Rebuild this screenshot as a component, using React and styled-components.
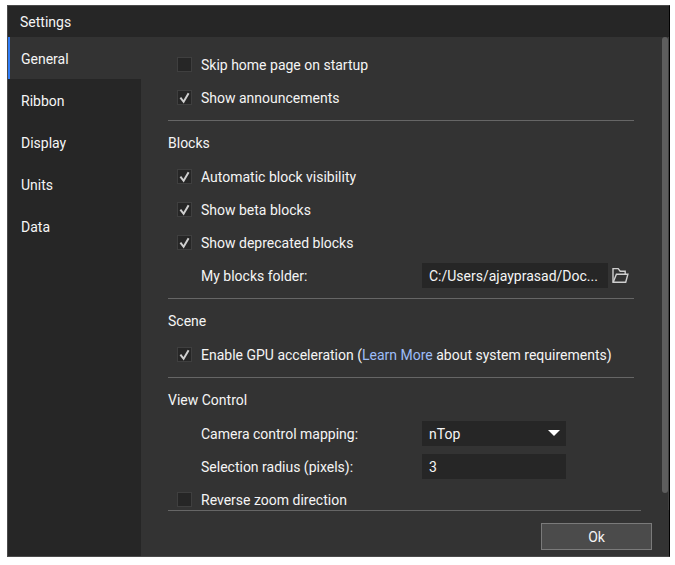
import React, { useEffect, useLayoutEffect, useRef, useState } from "react";
import styled, { createGlobalStyle } from "styled-components";

const tabs = ["General", "Ribbon", "Display", "Units", "Data"];

const CheckRow = ({ id, defaultChecked, children }) => {
  const [checked, setChecked] = useState(!!defaultChecked);

  return (
    <Row>
      <CheckHolder>
        <CheckInput
          type="checkbox"
          id={id}
          checked={checked}
          onChange={(e) => setChecked(e.target.checked)}
        />
        {checked && (
          <CheckMark viewBox="0 0 15 15" aria-hidden="true">
            <path d="M3.4 7.6 L6.6 11.8 L11.6 3.2" />
          </CheckMark>
        )}
      </CheckHolder>
      <label htmlFor={id}>{children}</label>
    </Row>
  );
};

const App = () => {
  const [active, setActive] = useState("General");
  const [folder, setFolder] = useState("C:/Users/ajayprasad/Doc...");
  const [mapping, setMapping] = useState("nTop");
  const [radius, setRadius] = useState("3");
  const [thumb, setThumb] = useState({ top: 0, height: 0 });
  const scrollRef = useRef(null);

  const updateThumb = () => {
    const { clientHeight, scrollHeight, scrollTop } = scrollRef.current;
    const ratio = clientHeight / scrollHeight;
    setThumb({
      top: Math.round(scrollTop * ratio),
      height: ratio < 1 ? Math.round(clientHeight * ratio) : 0,
    });
  };

  useLayoutEffect(updateThumb, []);

  useEffect(() => {
    window.addEventListener("resize", updateThumb);
    return () => window.removeEventListener("resize", updateThumb);
  }, []);

  return (
    <React.Fragment>
      <GlobalStyle />
      <Dialog>
        <TitleBar>Settings</TitleBar>
        <Body>
          <SideBar>
            {tabs.map((tab) => (
              <TabButton
                key={tab}
                type="button"
                $active={tab === active}
                onClick={() => setActive(tab)}
              >
                {tab}
              </TabButton>
            ))}
          </SideBar>

          <Main>
            <ScrollBox>
              <ScrollArea ref={scrollRef} onScroll={updateThumb}>
                <Section>
                  <CheckRow id="skip-home">Skip home page on startup</CheckRow>
                  <CheckRow id="announcements" defaultChecked>
                    Show announcements
                  </CheckRow>
                </Section>

                <Section>
                  <SectionTitle>Blocks</SectionTitle>
                  <CheckRow id="auto-visibility" defaultChecked>
                    Automatic block visibility
                  </CheckRow>
                  <CheckRow id="beta-blocks" defaultChecked>
                    Show beta blocks
                  </CheckRow>
                  <CheckRow id="deprecated-blocks" defaultChecked>
                    Show deprecated blocks
                  </CheckRow>
                  <FieldRow>
                    <FieldLabel htmlFor="blocks-folder">
                      My blocks folder:
                    </FieldLabel>
                    <FolderInput
                      id="blocks-folder"
                      type="text"
                      value={folder}
                      onChange={(e) => setFolder(e.target.value)}
                    />
                    <IconButton type="button" aria-label="Browse">
                      <svg viewBox="0 0 17 17" width="17" height="17">
                        <path d="M1 15.3V1.6h5.2l2 2.6h5v3" />
                        <path d="M1.2 15.3L4.4 7.2h11.5l-2.2 8.1z" />
                      </svg>
                    </IconButton>
                  </FieldRow>
                </Section>

                <Section>
                  <SectionTitle>Scene</SectionTitle>
                  <CheckRow id="gpu" defaultChecked>
                    Enable GPU acceleration (<Link href="#gpu">Learn More</Link>{" "}
                    about system requirements)
                  </CheckRow>
                </Section>

                <Section>
                  <SectionTitle>View Control</SectionTitle>
                  <FieldRow>
                    <FieldLabel htmlFor="camera">
                      Camera control mapping:
                    </FieldLabel>
                    <SelectBox>
                      <Select
                        id="camera"
                        value={mapping}
                        onChange={(e) => setMapping(e.target.value)}
                      >
                        <option>nTop</option>
                      </Select>
                      <Arrow viewBox="0 0 12 6" aria-hidden="true">
                        <path d="M0 0h12L6 6z" />
                      </Arrow>
                    </SelectBox>
                  </FieldRow>
                  <FieldRow>
                    <FieldLabel htmlFor="radius">
                      Selection radius (pixels):
                    </FieldLabel>
                    <ShortInput
                      id="radius"
                      type="text"
                      value={radius}
                      onChange={(e) => setRadius(e.target.value)}
                    />
                  </FieldRow>
                  <CheckRow id="reverse-zoom">Reverse zoom direction</CheckRow>
                </Section>
              </ScrollArea>
              <Track>
                <Thumb style={{ marginTop: thumb.top, height: thumb.height }} />
              </Track>
            </ScrollBox>

            <Footer>
              <OkButton type="button">Ok</OkButton>
            </Footer>
          </Main>
        </Body>
      </Dialog>
    </React.Fragment>
  );
};
export default App;

const GlobalStyle = createGlobalStyle`
  * {
    box-sizing: border-box;
  }

  body {
    margin: 0;
    background-color: #ffffff;
  }

  body, button, input, select {
    font-family: Roboto, "Liberation Sans", sans-serif;
    font-size: 14px;
    color: #f5f5f5;
  }
`;

const Dialog = styled.div`
  display: flex;
  flex-direction: column;
  height: calc(100vh - 13px);
  margin: 5px 5px 8px 7px;
  border: 1px solid #4a4a4a;
  border-right-color: #000000;
  background-color: #333333;
`;

const TitleBar = styled.header`
  height: 31px;
  padding: 0 12px;
  line-height: 32px;
  background-color: #262626;
`;

const Body = styled.div`
  display: flex;
  flex: 1;
  min-height: 0;
`;

const SideBar = styled.nav`
  display: flex;
  flex-direction: column;
  width: 133px;
  background-color: #262626;
`;

const TabButton = styled.button`
  height: 42px;
  padding: 2px 0 0 11px;
  border: none;
  border-left: 2px solid ${(props) => (props.$active ? "#2f7cf6" : "#262626")};
  background-color: ${(props) => (props.$active ? "#333333" : "#262626")};
  text-align: left;
  cursor: pointer;
`;

const Main = styled.main`
  display: flex;
  flex-direction: column;
  flex: 1;
  min-width: 0;
`;

const ScrollBox = styled.div`
  display: flex;
  flex: 1;
  min-height: 0;
`;

const ScrollArea = styled.div`
  flex: 1;
  min-width: 0;
  padding: 5px 28px 6px 27px;
  overflow-y: scroll;
  scrollbar-width: none;
`;

const Track = styled.div`
  width: 7px;
  border-right: 1px solid #404040;
`;

const Thumb = styled.div`
  border-radius: 3px;
  background-color: #5e5e5e;
`;

const Section = styled.section`
  padding: 6px 0;
  border-bottom: 1px solid #666666;
  &:last-child {
    border-bottom: none;
  }
`;

const SectionTitle = styled.h2`
  margin: 0;
  font-size: 14px;
  font-weight: 400;
  line-height: 33px;
`;

const Row = styled.div`
  display: flex;
  align-items: center;
  height: 33px;
  padding-left: 9px;
  white-space: nowrap;
`;

const FieldRow = styled(Row)`
  padding-left: 33px;
`;

const CheckHolder = styled.span`
  position: relative;
  width: 15px;
  height: 15px;
  margin-right: 9px;
`;

const CheckInput = styled.input`
  display: block;
  width: 15px;
  height: 15px;
  margin: 0;
  appearance: none;
  border: 1px solid #3f3f3f;
  background-color: #262626;
`;

const CheckMark = styled.svg`
  position: absolute;
  top: 0;
  left: 0;
  width: 15px;
  height: 15px;
  fill: none;
  stroke: #cfcfcf;
  stroke-width: 2;
  pointer-events: none;
`;

const FieldLabel = styled.label`
  flex: none;
  width: 221px;
`;

const TextInput = styled.input`
  height: 25px;
  padding: 0 7px;
  border: none;
  outline: none;
  background-color: #262626;
  text-overflow: ellipsis;
`;

const FolderInput = styled(TextInput)`
  flex: 1;
  min-width: 0;
`;

const ShortInput = styled(TextInput)`
  width: 144px;
`;

const IconButton = styled.button`
  display: flex;
  padding: 0;
  margin: 0 5px 0 4px;
  border: none;
  background: transparent;
  cursor: pointer;
  svg {
    fill: none;
    stroke: #cfcfcf;
    stroke-width: 1.4;
  }
`;

const SelectBox = styled.div`
  position: relative;
  width: 144px;
`;

const Select = styled.select`
  display: block;
  width: 100%;
  height: 25px;
  padding: 0 7px;
  appearance: none;
  border: none;
  border-radius: 0;
  outline: none;
  background-color: #262626;
`;

const Arrow = styled.svg`
  position: absolute;
  top: 9px;
  right: 6px;
  width: 12px;
  height: 6px;
  fill: #ffffff;
  pointer-events: none;
`;

const Link = styled.a`
  color: #9dbdf8;
  text-decoration: none;
`;

const Footer = styled.footer`
  display: flex;
  justify-content: flex-end;
  height: 46px;
  margin: 0 17px 0 27px;
  padding-top: 13px;
  background: linear-gradient(#666666, #666666) no-repeat 0 0 / calc(100% - 11px) 1px;
`;

const OkButton = styled.button`
  width: 111px;
  height: 27px;
  padding: 0;
  border: 1px solid #7a7a7a;
  background-color: #4b4b4b;
  cursor: pointer;
`;
